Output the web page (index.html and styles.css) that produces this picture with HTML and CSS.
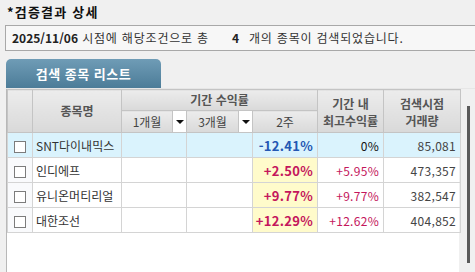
FILE: index.html
```html
<!DOCTYPE html>
<html lang="ko">
<head>
<meta charset="utf-8">
<link rel="stylesheet" href="styles.css">
</head>
<body>
<div class="title">*검증결과 상세</div>
<div class="info"><b>2025/11/06</b><span class="ko">&nbsp;시점에 해당조건으로 총</span><span class="cnt">4</span><span class="ko">개의 종목이 검색되었습니다.</span></div>
<div class="tab">검색 종목 리스트</div>
<div class="gridwrap">
  <div class="grid">
    <table>
      <colgroup>
        <col class="c0"><col class="c1"><col class="c2"><col class="c3"><col class="c4"><col class="c5"><col class="c6">
      </colgroup>
      <thead>
        <tr class="h1">
          <th rowspan="2"></th>
          <th rowspan="2">종목명</th>
          <th colspan="3">기간 수익률</th>
          <th rowspan="2" class="two">기간 내<br>최고수익률</th>
          <th rowspan="2" class="two">검색시점<br>거래량</th>
        </tr>
        <tr class="h2">
          <th class="sel"><div class="selin"><span class="lbl">1개월</span><span class="dd"><i></i></span></div></th>
          <th class="sel"><div class="selin"><span class="lbl">3개월</span><span class="dd"><i></i></span></div></th>
          <th class="sub">2주</th>
        </tr>
      </thead>
      <tbody>
        <tr class="active">
          <td><span class="cb"></span></td><td class="nm">SNT다이내믹스</td><td></td><td></td>
          <td class="num bold blue">-12.41%</td><td class="num black">0%</td><td class="num">85,081</td>
        </tr>
        <tr>
          <td><span class="cb"></span></td><td class="nm">인디에프</td><td></td><td></td>
          <td class="num bold red yel">+2.50%</td><td class="num red">+5.95%</td><td class="num">473,357</td>
        </tr>
        <tr>
          <td><span class="cb"></span></td><td class="nm">유니온머티리얼</td><td></td><td></td>
          <td class="num bold red yel">+9.77%</td><td class="num red">+9.77%</td><td class="num">382,547</td>
        </tr>
        <tr>
          <td><span class="cb"></span></td><td class="nm">대한조선</td><td></td><td></td>
          <td class="num bold red yel">+12.29%</td><td class="num red">+12.62%</td><td class="num">404,852</td>
        </tr>
      </tbody>
    </table>
  </div>
  <div class="scroll"><div class="thumb"></div></div>
</div>
</body>
</html>
```

FILE: styles.css
```css
* { box-sizing: border-box; }
html, body { margin: 0; padding: 0; }
body {
  width: 475px;
  height: 272px;
  overflow: hidden;
  background: #f0f0f0;
  font-family: "Noto Sans CJK KR", "Noto Sans", sans-serif;
  font-size: 12px;
  color: #333;
}
.title {
  height: 25px;
  padding: 4px 0 0 7px;
  font-size: 13px;
  font-weight: bold;
  color: #111;
  line-height: 16px;
  letter-spacing: 1.2px;
}
.info {
  margin-left: 5px;
  height: 26px;
  border-top: 1px solid #a8a8a8;
  border-bottom: 1px solid #a8a8a8;
  border-left: 1px solid #a8a8a8;
  background: #f7f7f7;
  padding-left: 6px;
  line-height: 23px;
  font-size: 12px;
  color: #333;
  white-space: nowrap;
}
.info b { color: #222; }
.ko { letter-spacing: 0.8px; }
.cnt { font-weight: bold; margin: 0 10px 0 23px; color: #222; }
.tab {
  margin: 8px 0 0 6px;
  width: 155px;
  height: 29px;
  border-radius: 5px 5px 0 0;
  background: linear-gradient(#6f9cb6, #4c7c98);
  color: #fff;
  font-weight: bold;
  font-size: 13px;
  line-height: 29px;
  text-align: center;
  letter-spacing: 0.5px;
}
.gridwrap {
  display: flex;
  margin-left: 6px;
  height: 184px;
  border-top: 1px solid #e6e6e6;
}
.grid {
  width: 453px;
  background: #fff;
  border-left: 1px solid #b8b8b8;
}
.scroll {
  width: 16px;
  padding: 17px 0 0 8px;
}
.thumb {
  width: 3px;
  height: 157px;
  background: #5a5a5a;
}
table {
  border-collapse: collapse;
  table-layout: fixed;
  width: 453px;
}
col.c0 { width: 25px; }
col.c1 { width: 89px; }
col.c2 { width: 65px; }
col.c3 { width: 66px; }
col.c4 { width: 65px; }
col.c5 { width: 66px; }
col.c6 { width: 77px; }
th, td {
  border: 1px solid #d4d4d4;
  padding: 0;
}
th {
  background: linear-gradient(#ececec, #d9d9d9);
  color: #555;
  font-weight: bold;
  font-size: 12px;
  line-height: 16px;
  text-align: center;
  border-color: #c4c4c4;
}
th.two { line-height: 17px; padding-top: 1px; }
thead tr.h1 { height: 21px; }
thead tr.h2 { height: 22px; }
th.sub { font-weight: normal; color: #444; }
th.sel { font-weight: normal; color: #444; }
.selin { display: flex; height: 21px; align-items: stretch; }
.lbl { flex: 1; line-height: 21px; text-align: center; }
.dd {
  width: 14px;
  background: #fff;
  border-left: 1px solid #c4c4c4;
  display: flex;
  align-items: center;
  justify-content: center;
}
.dd i {
  width: 0; height: 0;
  border-left: 4px solid transparent;
  border-right: 4px solid transparent;
  border-top: 4px solid #111;
}
tbody tr { height: 25px; }
td { color: #333; font-size: 12px; white-space: nowrap; }
td:first-child { text-align: center; background: #f9fafc; }
tr.active td { background: #daf3fd; }
.cb {
  display: inline-block;
  width: 12px;
  height: 12px;
  border: 1px solid #7c7c7c;
  background: #fff;
  vertical-align: middle;
}
.nm { padding-left: 3px; color: #333; }
.num { text-align: right; padding-right: 4px; color: #444; letter-spacing: 0.3px; }
.bold { font-weight: bold; font-size: 13px; }
.blue { color: #2457b3; }
.red { color: #c4165c; }
.black { color: #111; }
.yel { background: #fffbcb; }
```
